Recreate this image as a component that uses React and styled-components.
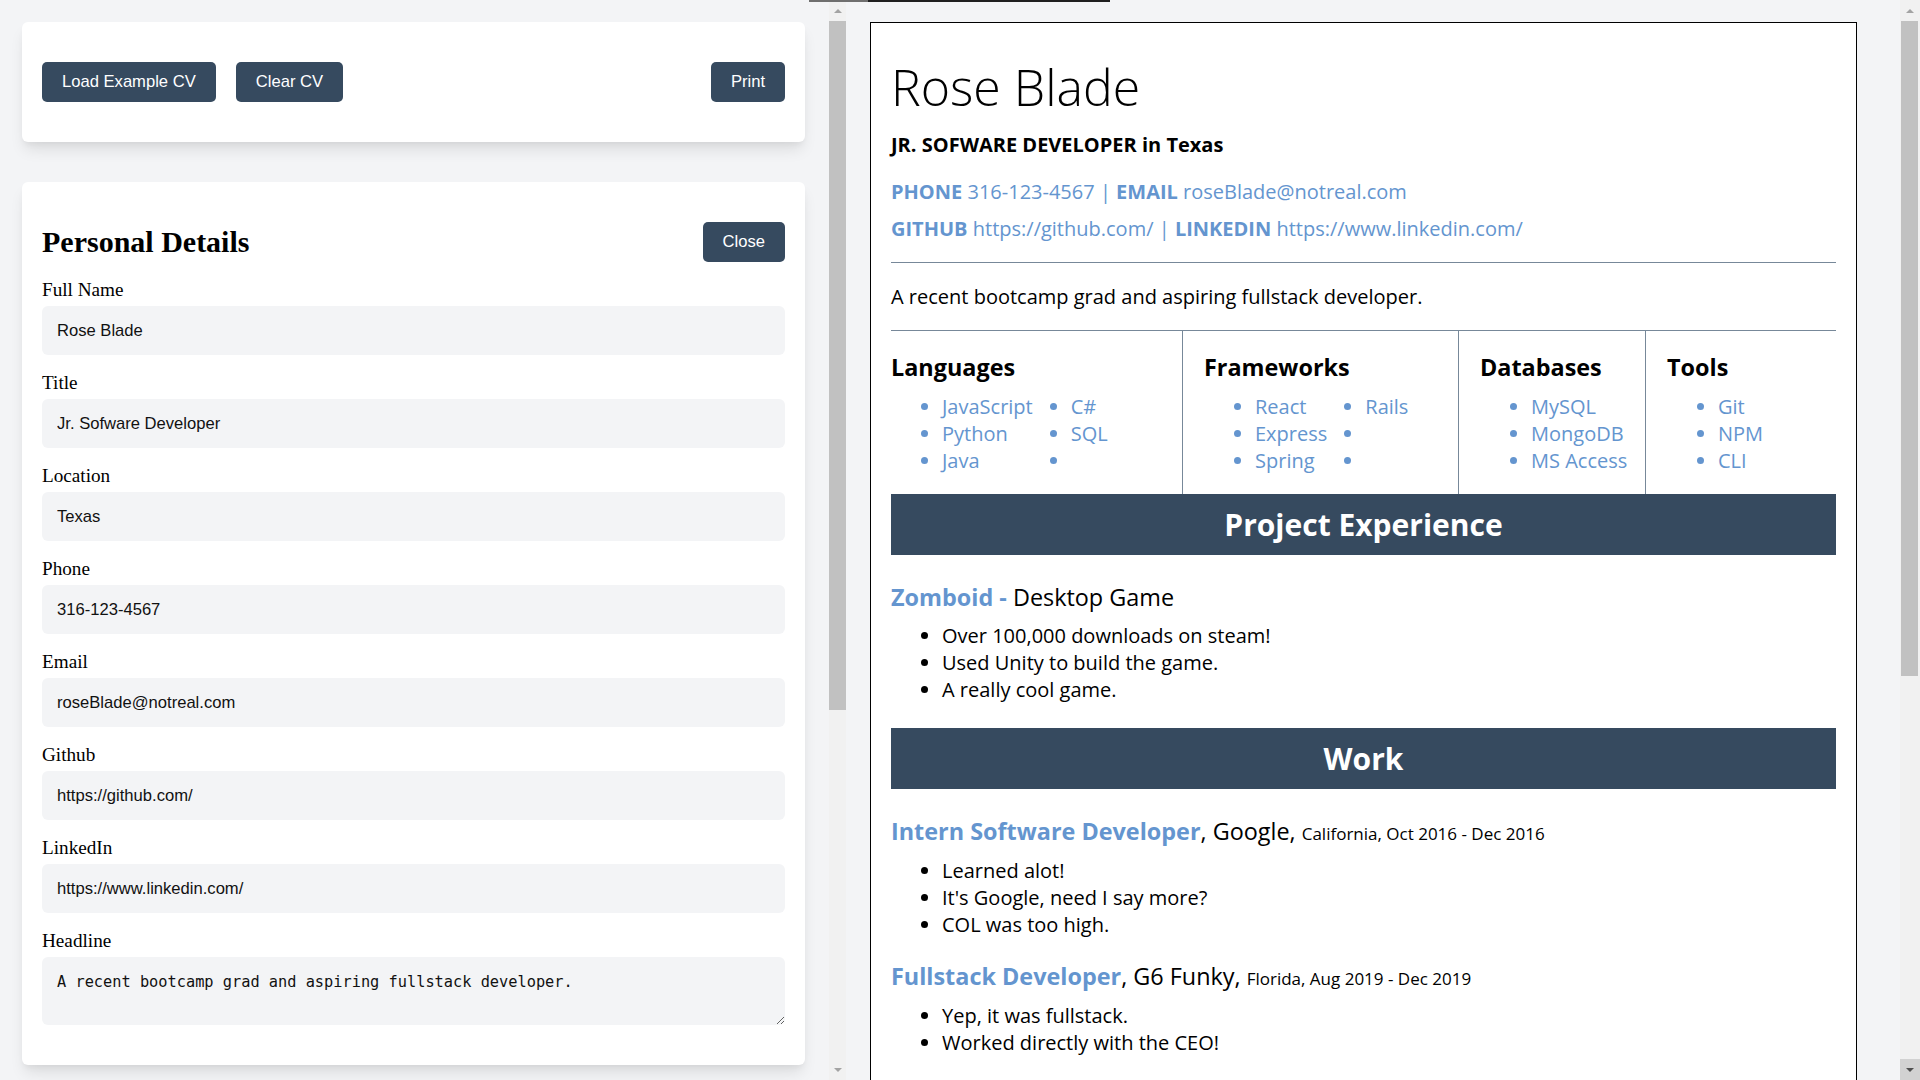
import React, { useState } from "react";
import styled, { createGlobalStyle, css } from "styled-components";

const BLUE = "#6495cf";
const SLATE = "#364a5f";
const RULE = "#778899";

const VIEWPORT = 1080;
const RAIL_BUTTON = 21;

const GlobalStyle = createGlobalStyle`
  html, body {
    margin: 0;
    height: 100%;
  }
  body {
    background: #f3f4f6;
    overflow: hidden;
    font-family: "Liberation Serif", "Times New Roman", serif;
    color: #000;
  }
  * {
    box-sizing: border-box;
  }
`;

const Page = styled.div`
  position: relative;
  display: grid;
  grid-template-columns: 829px 17px 1fr 20px;
  height: 100vh;
  background: #f3f4f6;
`;

const TopEdge = styled.div`
  position: absolute;
  top: 0;
  left: 809px;
  width: 301px;
  height: 2px;
  background: linear-gradient(to right, #6f6f6f 0 59px, #1f1f1f 59px);
  z-index: 2;
`;

/* ---------- scroll rails ---------- */

const RailBox = styled.div`
  display: flex;
  flex-direction: column;
  height: 100vh;
  background: #f1f1f1;
`;

const RailButton = styled.div`
  flex-shrink: 0;
  height: ${RAIL_BUTTON}px;
  display: flex;
  align-items: center;
  justify-content: center;
  background: ${(p) => (p.$active ? "#d2d2d2" : "#f1f1f1")};
  &::after {
    content: "";
    border-left: 4px solid transparent;
    border-right: 4px solid transparent;
    ${(p) =>
      p.$down
        ? `border-top: 4px solid ${p.$active ? "#505050" : "#a3a3a3"};`
        : `border-bottom: 4px solid ${p.$active ? "#505050" : "#a3a3a3"};`}
  }
`;

const RailTrack = styled.div`
  flex: 1;
  padding: ${(p) => p.$inset || "0"};
`;

const RailThumb = styled.div`
  background: #c1c1c1;
`;

const ScrollRail = ({ contentHeight, inset, activeDown }) => {
  const track = VIEWPORT - RAIL_BUTTON * 2;
  const thumb = Math.round((track * VIEWPORT) / contentHeight);
  return (
    <RailBox>
      <RailButton />
      <RailTrack $inset={inset}>
        <RailThumb style={{ height: thumb }} />
      </RailTrack>
      <RailButton $down $active={activeDown} />
    </RailBox>
  );
};

/* ---------- editor ---------- */

const hiddenScroll = css`
  height: 100vh;
  overflow-y: auto;
  scrollbar-width: none;
  &::-webkit-scrollbar {
    display: none;
  }
`;

const Editor = styled.aside`
  ${hiddenScroll}
  padding: 22px 24px 40px 22px;
  display: flex;
  flex-direction: column;
  gap: 40px;
`;

const Card = styled.section`
  flex-shrink: 0;
  background: #fff;
  border-radius: 6px;
  padding: 40px 20px;
  box-shadow: 0 10px 15px -3px rgba(0, 0, 0, 0.1),
    0 4px 6px -2px rgba(0, 0, 0, 0.05);
`;

const Toolbar = styled.div`
  display: flex;
  justify-content: space-between;
  align-items: center;
`;

const ButtonGroup = styled.div`
  display: flex;
  gap: 20px;
`;

const Button = styled.button`
  height: 40px;
  padding: 0 20px;
  border: none;
  border-radius: 5px;
  background: ${SLATE};
  color: #fff;
  font-family: "Liberation Sans", Arial, sans-serif;
  font-size: 16.6px;
  cursor: pointer;
`;

const CardHeader = styled.div`
  display: flex;
  justify-content: space-between;
  align-items: center;
  height: 40px;
`;

const CardTitle = styled.h2`
  margin: 0;
  font-size: 30px;
  font-weight: bold;
`;

const Field = styled.div`
  margin-top: 17px;
`;

const Label = styled.label`
  display: block;
  font-size: 19.2px;
  line-height: 22px;
  margin-bottom: 5px;
`;

const fieldBox = css`
  display: block;
  width: 100%;
  border: none;
  border-radius: 6px;
  background: #f3f4f6;
  color: #111;
  outline: none;
`;

const Input = styled.input`
  ${fieldBox}
  height: 49px;
  padding: 0 15px;
  font-family: "Liberation Sans", Arial, sans-serif;
  font-size: 16.6px;
`;

const TextArea = styled.textarea`
  ${fieldBox}
  height: 68px;
  padding: 16px 15px;
  font-family: "DejaVu Sans Mono", monospace;
  font-size: 15.3px;
  line-height: 19px;
  resize: vertical;
`;

/* ---------- preview ---------- */

const Preview = styled.main`
  ${hiddenScroll}
  padding: 22px 43px 22px 24px;
`;

const Resume = styled.article`
  min-height: 1667px;
  background: #fff;
  border: 1px solid #000;
  padding: 20px;
  font-family: "Open Sans", "Liberation Sans", sans-serif;
  font-size: 20px;
  line-height: 27px;
  color: #000;
`;

const Name = styled.h1`
  margin: 14px 0 0;
  font-size: 50px;
  font-weight: 300;
  line-height: 60px;
`;

const Role = styled.p`
  margin: 14px 0 0;
  font-weight: 700;
`;

const Upper = styled.span`
  text-transform: uppercase;
`;

const Contacts = styled.div`
  margin-top: 20px;
  display: flex;
  flex-direction: column;
  gap: 10px;
  color: ${BLUE};
`;

const ContactLine = styled.p`
  margin: 0;
`;

const Rule = styled.hr`
  margin: 20px 0;
  border: none;
  border-top: 1px solid ${RULE};
`;

const Headline = styled.p`
  margin: 0 0 20px;
`;

const SkillsGrid = styled.div`
  display: grid;
  grid-template-columns: 291fr 276fr 187fr 191fr;
  border-top: 1px solid ${RULE};
`;

const SkillCell = styled.div`
  padding: 20px 0 20px 21px;
  border-left: 1px solid ${RULE};
  &:first-child {
    padding-left: 0;
    border-left: none;
  }
`;

const SkillTitle = styled.h3`
  margin: 0 0 10px;
  font-size: 23.4px;
  line-height: 32px;
  font-weight: 700;
`;

const SkillList = styled.ul`
  margin: 0;
  padding-left: 51px;
  display: grid;
  grid-template-rows: repeat(3, 27px);
  grid-auto-flow: column;
  grid-auto-columns: max-content;
  column-gap: 38px;
  color: ${BLUE};
`;

const SkillItem = styled.li`
  display: list-item;
`;

const Section = styled.section`
  padding-bottom: 25px;
`;

const SectionBar = styled.h2`
  margin: 0;
  padding: 10px;
  background: ${SLATE};
  color: #fff;
  text-align: center;
  font-size: 30px;
  font-weight: 700;
  line-height: 41px;
`;

const Entry = styled.div`
  padding-top: 26px;
  & + & {
    padding-top: 22px;
  }
`;

const EntryTitle = styled.h3`
  margin: 0 0 ${(p) => (p.$loose ? "9px" : "7px")};
  font-size: 23.4px;
  font-weight: 400;
  line-height: 32px;
`;

const Accent = styled.span`
  color: ${BLUE};
  font-weight: 700;
`;

const Meta = styled.span`
  font-size: 17px;
`;

const Bullets = styled.ul`
  margin: 0;
  padding-left: 51px;
`;

/* ---------- data ---------- */

const personalFields = [
  { key: "name", label: "Full Name" },
  { key: "title", label: "Title" },
  { key: "location", label: "Location" },
  { key: "phone", label: "Phone" },
  { key: "email", label: "Email" },
  { key: "github", label: "Github" },
  { key: "linkedin", label: "LinkedIn" },
];

const initialPersonal = {
  name: "Rose Blade",
  title: "Jr. Sofware Developer",
  location: "Texas",
  phone: "316-123-4567",
  email: "roseBlade@notreal.com",
  github: "https://github.com/",
  linkedin: "https://www.linkedin.com/",
  headline: "A recent bootcamp grad and aspiring fullstack developer.",
};

const skills = [
  { title: "Languages", items: ["JavaScript", "Python", "Java", "C#", "SQL", ""] },
  { title: "Frameworks", items: ["React", "Express", "Spring", "Rails", "", ""] },
  { title: "Databases", items: ["MySQL", "MongoDB", "MS Access"] },
  { title: "Tools", items: ["Git", "NPM", "CLI"] },
];

const projects = [
  {
    name: "Zomboid",
    kind: "Desktop Game",
    points: [
      "Over 100,000 downloads on steam!",
      "Used Unity to build the game.",
      "A really cool game.",
    ],
  },
];

const jobs = [
  {
    role: "Intern Software Developer",
    company: "Google",
    meta: "California, Oct 2016 - Dec 2016",
    points: ["Learned alot!", "It's Google, need I say more?", "COL was too high."],
  },
  {
    role: "Fullstack Developer",
    company: "G6 Funky",
    meta: "Florida, Aug 2019 - Dec 2019",
    points: ["Yep, it was fullstack.", "Worked directly with the CEO!"],
  },
];

/* ---------- components ---------- */

const PointList = ({ points }) => (
  <Bullets>
    {points.map((p) => (
      <li key={p}>{p}</li>
    ))}
  </Bullets>
);

const Job = ({ job }) => (
  <Entry>
    <EntryTitle>
      <Accent>{job.role}</Accent>, {job.company}, <Meta>{job.meta}</Meta>
    </EntryTitle>
    <PointList points={job.points} />
  </Entry>
);

const App = () => {
  const [personal, setPersonal] = useState(initialPersonal);
  const update = (key) => (event) =>
    setPersonal({ ...personal, [key]: event.target.value });

  return (
    <Page>
      <GlobalStyle />
      <TopEdge />
      <Editor>
        <Card>
          <Toolbar>
            <ButtonGroup>
              <Button>Load Example CV</Button>
              <Button>Clear CV</Button>
            </ButtonGroup>
            <Button>Print</Button>
          </Toolbar>
        </Card>

        <Card>
          <CardHeader>
            <CardTitle>Personal Details</CardTitle>
            <Button>Close</Button>
          </CardHeader>
          {personalFields.map((f) => (
            <Field key={f.key}>
              <Label htmlFor={f.key}>{f.label}</Label>
              <Input id={f.key} value={personal[f.key]} onChange={update(f.key)} />
            </Field>
          ))}
          <Field>
            <Label htmlFor="headline">Headline</Label>
            <TextArea
              id="headline"
              value={personal.headline}
              onChange={update("headline")}
            />
          </Field>
        </Card>
      </Editor>

      <ScrollRail contentHeight={1627} />

      <Preview>
        <Resume>
          <Name>{personal.name}</Name>
          <Role>
            <Upper>{personal.title}</Upper> in {personal.location}
          </Role>
          <Contacts>
            <ContactLine>
              <strong>PHONE</strong> {personal.phone} | <strong>EMAIL</strong>{" "}
              {personal.email}
            </ContactLine>
            <ContactLine>
              <strong>GITHUB</strong> {personal.github} | <strong>LINKEDIN</strong>{" "}
              {personal.linkedin}
            </ContactLine>
          </Contacts>
          <Rule />
          <Headline>{personal.headline}</Headline>

          <SkillsGrid>
            {skills.map((group) => (
              <SkillCell key={group.title}>
                <SkillTitle>{group.title}</SkillTitle>
                <SkillList>
                  {group.items.map((item, i) => (
                    <SkillItem key={i}>{item}</SkillItem>
                  ))}
                </SkillList>
              </SkillCell>
            ))}
          </SkillsGrid>

          <Section>
            <SectionBar>Project Experience</SectionBar>
            {projects.map((p) => (
              <Entry key={p.name}>
                <EntryTitle $loose>
                  <Accent>{p.name} -</Accent> {p.kind}
                </EntryTitle>
                <PointList points={p.points} />
              </Entry>
            ))}
          </Section>

          <Section>
            <SectionBar>Work</SectionBar>
            {jobs.map((job) => (
              <Job key={job.role} job={job} />
            ))}
          </Section>
        </Resume>
      </Preview>

      <ScrollRail contentHeight={1711} inset="0 2px 0 1px" activeDown />
    </Page>
  );
};

export default App;
